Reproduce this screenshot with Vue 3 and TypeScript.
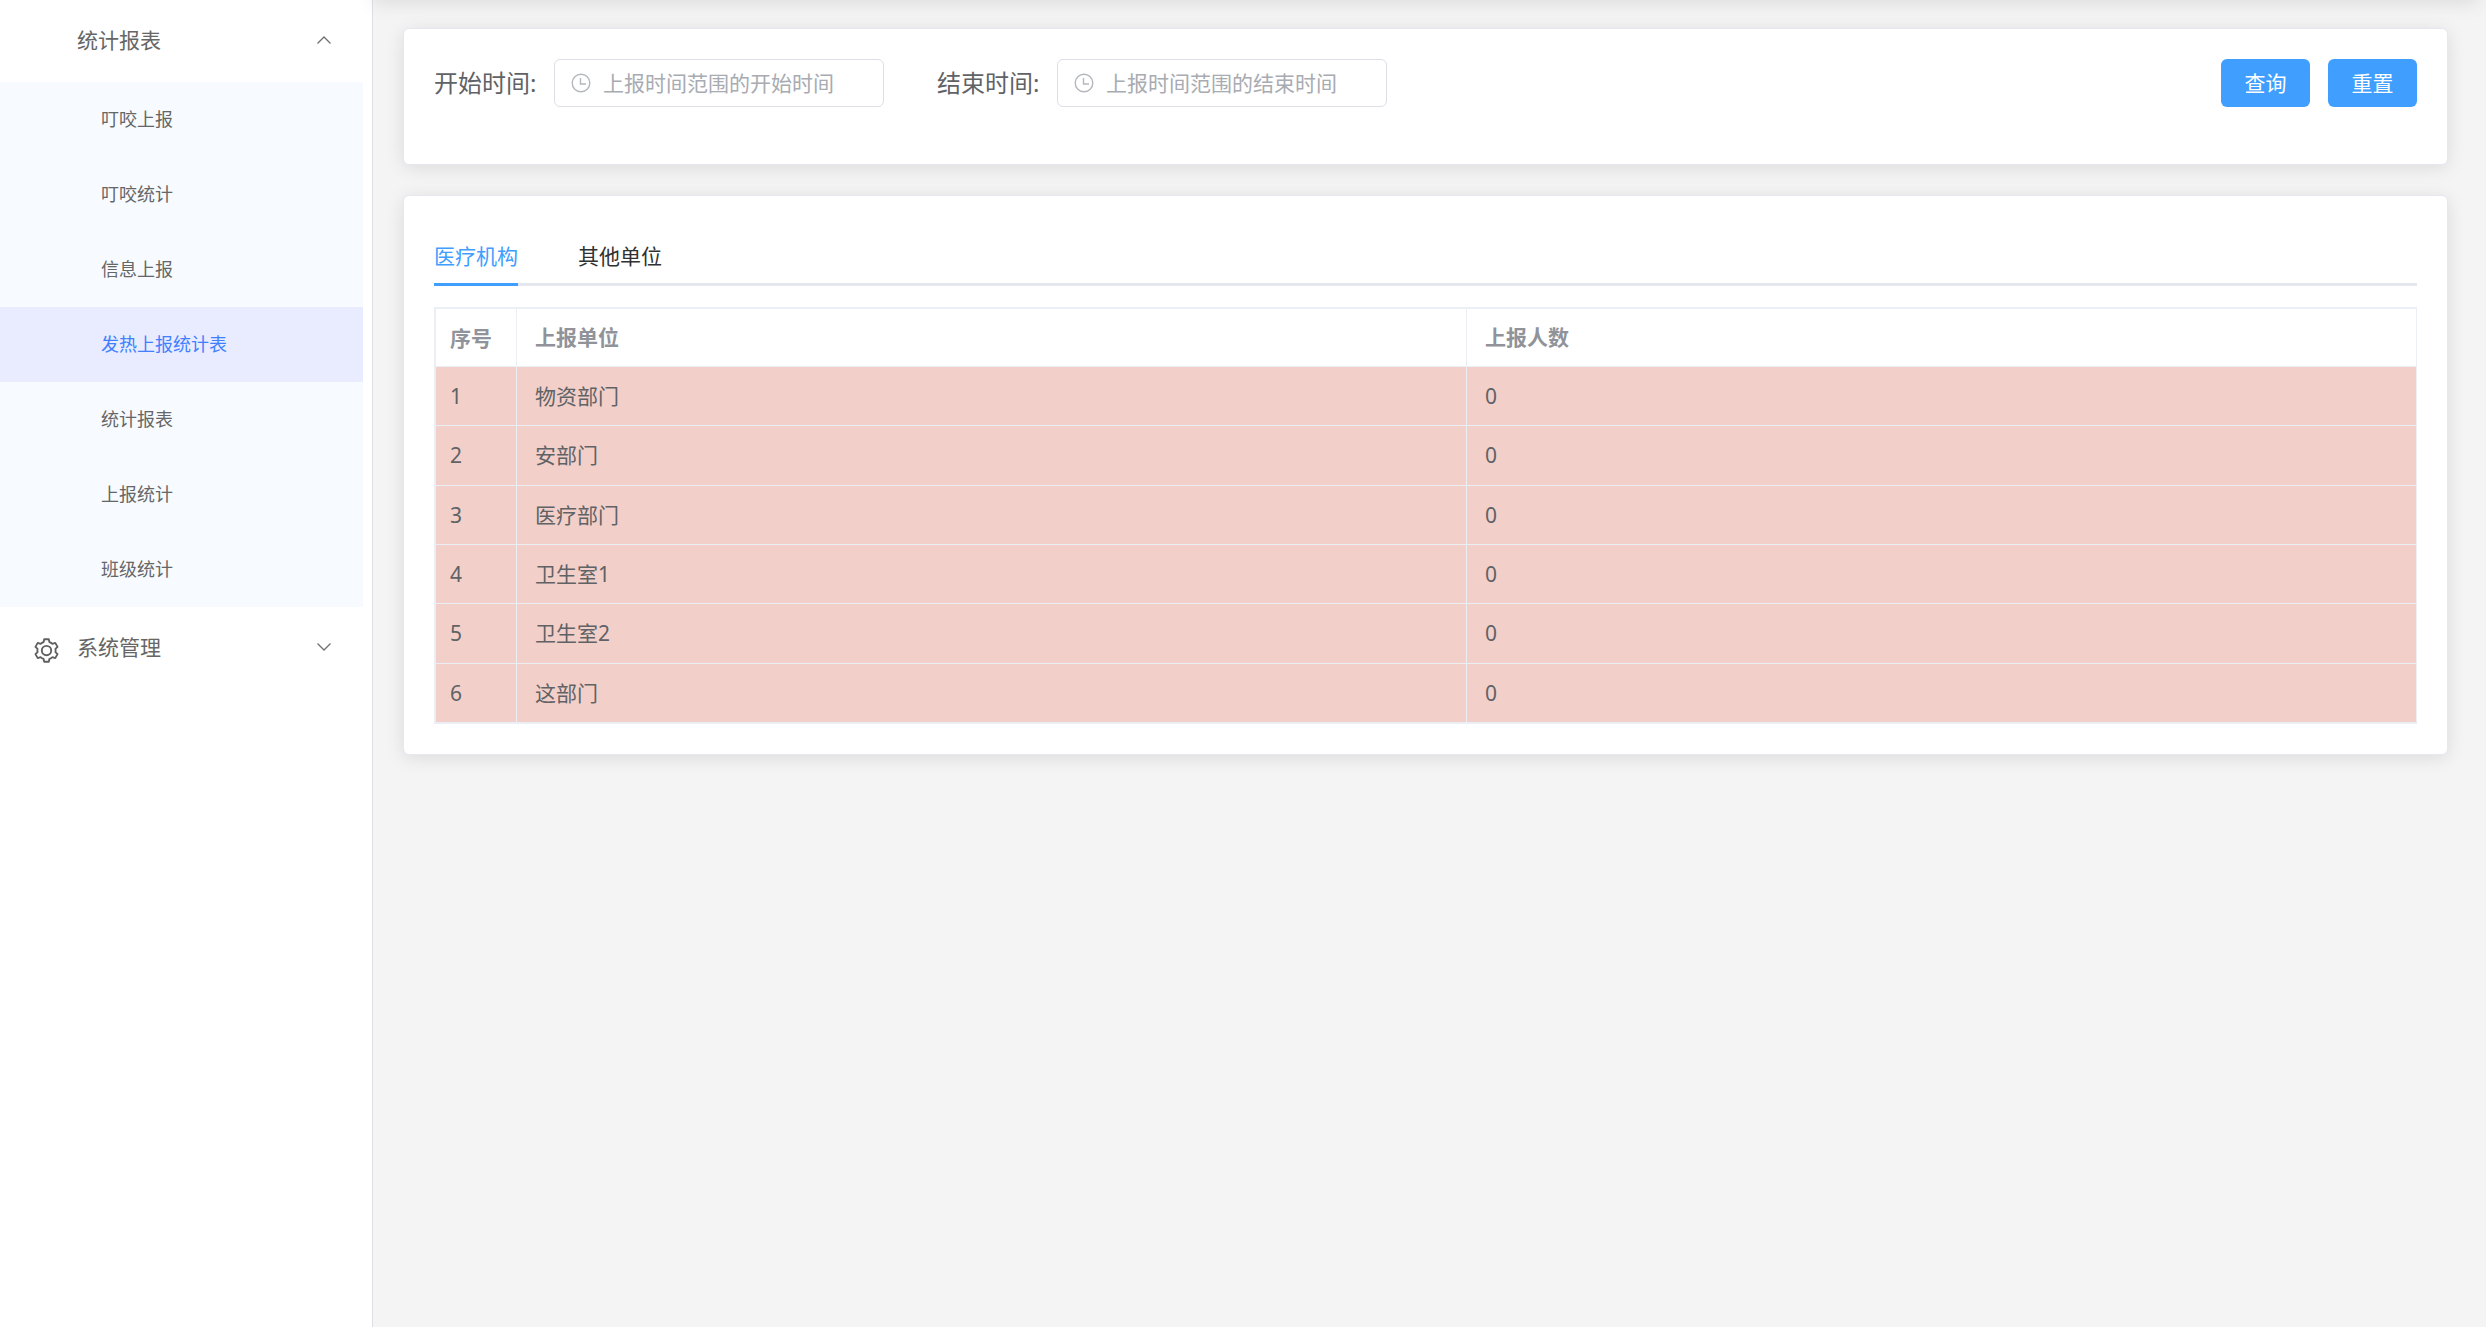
<script setup lang="ts">
import { ref } from 'vue'

interface ReportRow {
  id: number
  unit: string
  count: number
}

const reportItems: string[] = [
  '叮咬上报',
  '叮咬统计',
  '信息上报',
  '发热上报统计表',
  '统计报表',
  '上报统计',
  '班级统计',
]
const activeItem = ref('发热上报统计表')
const reportsOpen = ref(true)

const tabs: string[] = ['医疗机构', '其他单位']
const activeTab = ref(tabs[0])

const startTime = ref('')
const endTime = ref('')

const units: string[] = ['物资部门', '安部门', '医疗部门', '卫生室1', '卫生室2', '这部门']
const rows: ReportRow[] = units.map((unit, i) => ({ id: i + 1, unit, count: 0 }))

function reset(): void {
  startTime.value = ''
  endTime.value = ''
}
</script>

<template>
  <div class="layout">
    <nav class="sidebar">
      <div class="menu">
        <button class="group" type="button" :aria-expanded="reportsOpen" @click="reportsOpen = !reportsOpen">
          <span class="group-icon"></span>
          <span class="group-title">统计报表</span>
          <svg class="chevron" :class="{ closed: !reportsOpen }" viewBox="0 0 16 16" aria-hidden="true">
            <path d="M1.5 11.5 8 5l6.5 6.5" />
          </svg>
        </button>
        <div v-if="reportsOpen" class="items">
          <a
            v-for="item in reportItems"
            :key="item"
            href="#"
            class="item"
            :class="{ active: item === activeItem }"
            @click.prevent="activeItem = item"
          >{{ item }}</a>
        </div>
        <button class="group" type="button" aria-expanded="false">
          <span class="group-icon">
            <svg class="gear" viewBox="0 0 24 24" aria-hidden="true">
              <path d="M9.800 1.200h4.400l.6 2.700q1.700.6 2.900 1.700l2.700-.9 2.200 3.800-2 1.900q.3 1.600 0 3.200l2 1.900-2.200 3.800-2.700-.9q-1.200 1.100-2.900 1.700l-.6 2.700H9.800l-.6-2.700q-1.700-.6-2.900-1.700l-2.700.9-2.200-3.800 2-1.900q-.3-1.600 0-3.200l-2-1.900 2.200-3.800 2.700.9q1.200-1.100 2.900-1.700z" />
              <circle cx="12" cy="12" r="4.500" />
            </svg>
          </span>
          <span class="group-title">系统管理</span>
          <svg class="chevron closed" viewBox="0 0 16 16" aria-hidden="true">
            <path d="M1.5 11.5 8 5l6.5 6.5" />
          </svg>
        </button>
      </div>
    </nav>

    <main class="main">
      <header class="topbar"></header>
      <section class="card">
        <form class="filters" @submit.prevent>
          <div class="field">
            <label for="start">开始时间:</label>
            <div class="picker">
              <svg class="clock" viewBox="0 0 20 20" aria-hidden="true">
                <circle cx="10" cy="10" r="8.800" />
                <path d="M9.500 5v6H15" />
              </svg>
              <input id="start" v-model="startTime" type="text" placeholder="上报时间范围的开始时间" />
            </div>
          </div>
          <div class="field">
            <label for="end">结束时间:</label>
            <div class="picker">
              <svg class="clock" viewBox="0 0 20 20" aria-hidden="true">
                <circle cx="10" cy="10" r="8.800" />
                <path d="M9.500 5v6H15" />
              </svg>
              <input id="end" v-model="endTime" type="text" placeholder="上报时间范围的结束时间" />
            </div>
          </div>
          <div class="actions">
            <button class="primary" type="submit">查询</button>
            <button class="primary" type="button" @click="reset">重置</button>
          </div>
        </form>
      </section>

      <section class="card">
        <div class="tabs" role="tablist">
          <button
            v-for="tab in tabs"
            :key="tab"
            class="tab"
            :class="{ active: tab === activeTab }"
            type="button"
            role="tab"
            :aria-selected="tab === activeTab"
            @click="activeTab = tab"
          >{{ tab }}</button>
        </div>
        <table class="report">
          <colgroup>
            <col class="col-index" />
            <col />
            <col />
          </colgroup>
          <thead>
            <tr>
              <th scope="col">序号</th>
              <th scope="col">上报单位</th>
              <th scope="col">上报人数</th>
            </tr>
          </thead>
          <tbody>
            <tr v-for="row in rows" :key="row.id">
              <td>{{ row.id }}</td>
              <td>{{ row.unit }}</td>
              <td>{{ row.count }}</td>
            </tr>
          </tbody>
        </table>
      </section>
    </main>
  </div>
</template>

<style>
body {
  margin: 0;
  background: #f4f4f4;
}
</style>

<style scoped>
.layout {
  display: flex;
  min-height: 100vh;
  overflow: hidden;
  font-family: "Noto Sans", "Noto Sans CJK SC", sans-serif;
  font-size: 21px;
  color: #606266;
}

.layout * {
  box-sizing: border-box;
}

button,
input {
  margin: 0;
  font: inherit;
}

button {
  padding: 0;
  border: 0;
  background: none;
  cursor: pointer;
}

.sidebar {
  flex: 0 0 373px;
  padding-right: 9px;
  border-right: 1px solid #dcdfe6;
  background: #fff;
}

.group {
  display: flex;
  align-items: center;
  width: 100%;
  height: 82px;
  padding: 0 31px 2px 34px;
  color: #666;
  text-align: left;
}

.group-icon {
  display: flex;
  width: 43px;
  padding-top: 6px;
}

.group-title {
  flex: 1;
  line-height: 30px;
}

.gear {
  width: 25px;
  height: 25px;
  fill: none;
  stroke: #606060;
  stroke-width: 1.8;
  stroke-linejoin: round;
}

.chevron {
  width: 16px;
  height: 16px;
  fill: none;
  stroke: #707070;
  stroke-width: 1.3;
}

.chevron.closed {
  transform: rotate(180deg);
}

.item {
  display: block;
  height: 75px;
  padding-left: 101px;
  background: #f7fbff;
  color: #666;
  font-size: 18px;
  line-height: 75px;
  text-decoration: none;
}

.item.active {
  background: #e9ecff;
  color: #4080ff;
}

.main {
  flex: 1;
  min-width: 0;
  padding: 0 38px 30px 30px;
  background: #f4f4f4;
}

/* The bar sits above the viewport; only its shadow falls on the page. */
.topbar {
  height: 60px;
  margin: -60px -30px 28px;
  box-shadow: 0 3px 18px rgba(0, 0, 0, 0.1);
}

.card {
  margin-bottom: 30px;
  padding: 30px;
  border: 1px solid #e6e8f0;
  border-radius: 6px;
  background: #fff;
  box-shadow: 0 3px 18px rgba(0, 0, 0, 0.1);
}

.filters {
  display: flex;
  gap: 53px;
  margin-bottom: 27px;
}

.field {
  display: flex;
  align-items: center;
}

.field label {
  width: 120px;
  font-size: 24px;
  line-height: 48px;
}

.picker {
  position: relative;
}

.picker input {
  display: block;
  width: 330px;
  height: 48px;
  padding: 0 15px 0 48px;
  border: 1px solid #dcdfe6;
  border-radius: 6px;
  outline: none;
  background: #fff;
  color: #606266;
}

.picker input::placeholder {
  color: #a8abb2;
  opacity: 1;
}

.clock {
  position: absolute;
  top: 14px;
  left: 17px;
  width: 20px;
  height: 20px;
  fill: none;
  stroke: #b4b7be;
  stroke-width: 1.4;
}

.actions {
  display: flex;
  gap: 18px;
  margin-left: auto;
}

.primary {
  width: 89px;
  height: 48px;
  padding-bottom: 2px;
  border-radius: 6px;
  background: #409eff;
  color: #fff;
}

.tabs {
  display: flex;
  gap: 60px;
  margin-bottom: 21px;
  box-shadow: inset 0 -3px #e4e7ed;
}

.tab {
  height: 60px;
  border-bottom: 3px solid transparent;
  color: #303133;
  line-height: 60px;
}

.tab.active {
  border-color: #409eff;
  color: #409eff;
}

.report {
  width: 100%;
  height: 417px;
  table-layout: fixed;
  border: solid #ebeef5;
  border-width: 2px 0 1px 2px;
  border-spacing: 0;
  line-height: 30px;
  text-align: left;
}

.col-index {
  width: 81px;
}

.report th,
.report td {
  padding: 0 18px;
  border: solid #ebeef5;
  border-width: 0 1px 1px 0;
}

.report th:first-child,
.report td:first-child {
  padding: 0 14px;
}

.report th {
  height: 58px;
  padding-bottom: 2px;
  color: #909399;
  font-weight: 700;
}

.report td {
  background: #f2d0c9;
}
</style>
